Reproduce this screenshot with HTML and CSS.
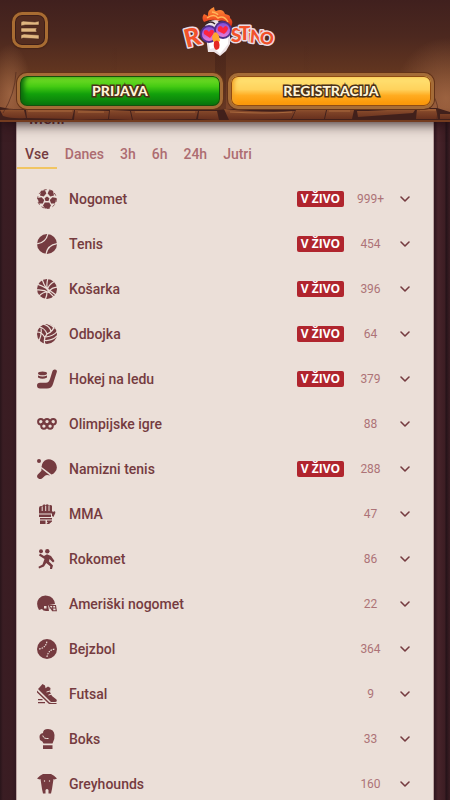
FILE: index.html
```html
<!DOCTYPE html>
<html lang="sl">
<head>
<meta charset="utf-8">
<meta name="viewport" content="width=device-width, initial-scale=1">
<title>Roostino</title>
<link rel="stylesheet" href="styles.css">
</head>
<body>
<header class="header">
  <svg class="roof" viewBox="0 0 450 122" preserveAspectRatio="none" aria-hidden="true">
    <defs>
      <linearGradient id="wood" x1="0" y1="0" x2="0" y2="1"><stop offset="0" stop-color="#40201e"/><stop offset=".3" stop-color="#4c281f"/><stop offset=".6" stop-color="#633620"/><stop offset=".88" stop-color="#7c452a"/><stop offset="1" stop-color="#5a2c1c"/></linearGradient>
      <linearGradient id="plank" x1="0" y1="0" x2="0" y2="1"><stop offset="0" stop-color="#92542f"/><stop offset=".35" stop-color="#7d4227"/><stop offset="1" stop-color="#642e1d"/></linearGradient>
      <radialGradient id="glow"><stop offset="0" stop-color="#b57850" stop-opacity=".6"/><stop offset="1" stop-color="#b57850" stop-opacity="0"/></radialGradient>
      <linearGradient id="seam"><stop offset="0" stop-color="#2a1010" stop-opacity="0"/><stop offset=".5" stop-color="#2a1010" stop-opacity=".3"/><stop offset="1" stop-color="#2a1010" stop-opacity="0"/></linearGradient>
    </defs>
    <rect width="450" height="122" fill="url(#wood)"/>
    <ellipse cx="446" cy="98" rx="52" ry="60" fill="url(#glow)"/>
    <ellipse cx="10" cy="94" rx="22" ry="50" fill="url(#glow)"/>
    <path d="M108 48h9v60h-9zM215 45h11v65h-11zM304 46h9v60h-9z" fill="url(#seam)"/>
    <path d="M0 107Q12 110 25 109H75L109 108 218 110 229 109H325L380 107 395 108H437L450 112V122H0z" fill="#41201b"/>
    <path d="M0 110Q10 109 24 110L26 118Q12 119 3 116zM26 110Q48 109 74 110L72 119 27 118zM75 110L109 111 108 119 74 120zM110 110L130 111 132 120 109 119zM131 111L198 111 196 119 133 120zM199 111H217L219 120 198 119zM224 109Q264 113 295 111L291 119 229 120zM296 110H326L324 119 292 119zM327 110H354L352 119 325 119zM357 111Q380 111 396 109L415 110 413 113 358 117zM417 109H436L438 119 416 119zM440 114H450V119H440z" fill="url(#plank)"/>
    <path d="M28 111H72M78 112H104M135 112H195M230 112Q265 114 292 112M329 111H350M420 110H436" stroke="#a8683d" stroke-width="1" fill="none"/>
    <path d="M16 72Q15 94 3 113M432 94Q440 104 437 119" stroke="#4a251a" stroke-opacity=".6" fill="none"/>
    <path d="M0 120H450V122H0z" fill="#743b1f"/>
  </svg>
  <div class="topbar">
    <button class="menu-button" aria-label="Meni">
      <svg viewBox="0 0 20 20" aria-hidden="true"><path d="M1 2L3 1 15 2 19 1V5L5 5 1 6zM1 8L17 8 16 10 17 12 1 12zM1 15L4 14 19 15V19L3 18 1 19z" fill="#e0b680" stroke="#3c1c16" stroke-width=".5"/></svg>
    </button>
    <a class="logo" href="#" aria-label="Roostino">
      <svg viewBox="0 0 94 52" aria-hidden="true">
        <defs>
          <linearGradient id="fire" x1="0" y1="0" x2="0" y2="1"><stop offset="0" stop-color="#ff963c"/><stop offset=".5" stop-color="#f45a25"/><stop offset="1" stop-color="#d52c1c"/></linearGradient>
          <linearGradient id="lens" x1="0" y1="0" x2="0" y2="1"><stop offset="0" stop-color="#7a49d8"/><stop offset="1" stop-color="#f07fd8"/></linearGradient>
        </defs>
        <path d="M26 20Q30 13 39 14Q47 14 51 22L51 38 47 45 41 50 35 46 29 46 28 38z" fill="#ede3e6"/>
        <path d="M30 38L31 43 35 42 41 48 45 43 49 38V31H30z" fill="#fff"/>
        <g class="logo-type">
          <text x="5" y="40" font-size="25" transform="rotate(-14 13 31)">R</text>
          <text x="52" y="36" font-size="19">S</text>
          <text x="60" y="34" font-size="19">T</text>
          <text x="69" y="36" font-size="17">i</text>
          <text x="71" y="37" font-size="18" transform="rotate(5 77 31)">N</text>
          <text x="81" y="38" font-size="17" transform="rotate(8 86 32)">O</text>
        </g>
        <path d="M25 16Q22 12 25 8Q27 9 29 10Q28 4 35 1Q35 4 37 5Q44 2 46 8Q52 9 51 12Q55 15 52 21Q50 17 45 17Q35 11 25 16z" fill="url(#fire)"/>
        <path d="M28 12Q35 7 39 12Q45 9 49 16M33 6Q38 7 39 9" fill="none" stroke="#ffb55a" stroke-width="1.4"/>
        <path d="M27 18Q32 14 36 18M39 16Q44 14 48 17" fill="none" stroke="#34252b" stroke-width="1.2"/>
        <ellipse cx="30" cy="28" rx="8" ry="8" fill="url(#lens)" stroke="#50308b" stroke-width="1.8"/>
        <ellipse cx="44" cy="24" rx="8" ry="8" fill="url(#lens)" stroke="#50308b" stroke-width="1.8"/>
        <path d="M31 32L25 28Q24 24 27 24Q29 24 30 26Q32 22 35 25Q35 28 31 32zM45 28L39 25Q38 21 41 20Q43 20 44 22Q47 18 49 22Q49 25 45 28z" fill="#ff2440"/>
        <path d="M33 31Q36 22 40 30L41 35 37 37 34 35z" fill="#ffa62e"/>
        <path d="M35 36Q38 33 40 36Q42 43 37 44Q34 42 35 36z" fill="#e52924"/>
      </svg>
    </a>
  </div>
  <nav class="auth" aria-label="Račun">
    <button class="auth-button login">PRIJAVA</button>
    <button class="auth-button register">REGISTRACIJA</button>
  </nav>
</header>
<main class="panel">
  <h1 class="title">Meni</h1>
  <nav class="tabs" aria-label="Čas">
    <button class="tab active">Vse</button><button class="tab">Danes</button><button class="tab">3h</button><button class="tab">6h</button><button class="tab">24h</button><button class="tab">Jutri</button>
  </nav>
  <svg class="defs" aria-hidden="true"><symbol id="chevron" viewBox="0 0 12 12"><path d="M2 4L6 8L10 4" fill="none" stroke="currentColor" stroke-width="1.6" stroke-linecap="round" stroke-linejoin="round"/></symbol></svg>
  <ul class="sports">
    <li><button class="sport"><svg class="icon" viewBox="0 0 20 20"><circle cx="10" cy="10" r="9.4" fill="none" stroke="currentColor" stroke-width=".9" stroke-dasharray="3 2.8"/><path d="M10 7.6L12.4 9.3 11.5 12H8.5L7.6 9.3zM4 1.8L8 1.3 9.3 4.5 6.7 7.4 3 6.4zM12 1.3L16 1.8 17 6.4 13.3 7.4 10.7 4.5zM.6 9L4.5 8.2 7.2 11 5.9 14.5 2 14.5zM19.4 9L15.5 8.2 12.8 11 14.1 14.5 18 14.5zM7.8 13.4H12.2L14 16.5 12 19.5H8L6 16.5z"/></svg><span class="name">Nogomet</span><span class="live">V ŽIVO</span><span class="count">999+</span><svg class="chevron"><use href="#chevron"/></svg></button></li>
    <li><button class="sport"><svg class="icon" viewBox="0 0 20 20"><circle cx="10" cy="10" r="10"/><path class="cut" d="M-.5 10Q9 9 11 -.5M9 20.5Q10 11 20.5 9.5"/></svg><span class="name">Tenis</span><span class="live">V ŽIVO</span><span class="count">454</span><svg class="chevron"><use href="#chevron"/></svg></button></li>
    <li><button class="sport"><svg class="icon" viewBox="0 0 20 20"><circle cx="10" cy="10" r="10"/><path class="cut" d="M5 0Q8 10 17 18M0 5Q9 8 19 16M11 -1Q9 6 10.5 11M-1 11Q6 10 13 14M18 2Q11 6 10.5 11M21 8Q15 8 12 12.5M2 17Q6 13 10 13M8 21Q10 17 10 13"/></svg><span class="name">Košarka</span><span class="live">V ŽIVO</span><span class="count">396</span><svg class="chevron"><use href="#chevron"/></svg></button></li>
    <li><button class="sport"><svg class="icon" viewBox="0 0 20 20"><circle cx="10" cy="10" r="10"/><path class="cut" d="M10 10Q8 4 2 3M10 10Q16 8 17.5 1M10 10Q6 14 8 21M6 0Q13 2 14 7.5M10 -.5Q17 2 17 5M0 8Q5 8 7.5 13M4 4.5Q5 10 2 17M20.5 7Q17 12 9 13M20 12Q15 17 8 16.5"/></svg><span class="name">Odbojka</span><span class="live">V ŽIVO</span><span class="count">64</span><svg class="chevron"><use href="#chevron"/></svg></button></li>
    <li><button class="sport"><svg class="icon" viewBox="0 0 20 20"><path d="M15.5 2Q16 .2 18 .4Q20.4.7 19.8 3L16 15Q14.7 19.5 10 19.5H3Q0 19.5 0 16.5Q0 13.7 3 13.7H9Q12 13.7 13 10z"/><ellipse cx="5.5" cy="4.4" rx="4.5" ry="1.8"/><path d="M1 6.5Q5.5 8.5 10 6.5V8.5Q5.5 11 1 8.5z"/></svg><span class="name">Hokej na ledu</span><span class="live">V ŽIVO</span><span class="count">379</span><svg class="chevron"><use href="#chevron"/></svg></button></li>
    <li><button class="sport"><svg class="icon" viewBox="0 0 20 20"><g fill="none" stroke="currentColor" stroke-width="2"><circle cx="3.8" cy="7.8" r="2.7"/><circle cx="10" cy="7.8" r="2.7"/><circle cx="16.2" cy="7.8" r="2.7"/><circle cx="6.9" cy="12" r="2.7"/><circle cx="13.1" cy="12" r="2.7"/></g></svg><span class="name">Olimpijske igre</span><span class="count">88</span><svg class="chevron"><use href="#chevron"/></svg></button></li>
    <li><button class="sport"><svg class="icon" viewBox="0 0 20 20"><circle cx="2" cy="2" r="2"/><path d="M4.5 8Q5 2 10 .5Q15 -.5 18.5 4Q21.5 9 18 13Q16.5 15 14.5 15.5zM4 9.3L13 16.5Q9.5 15.5 8 16.7L5 19.5Q2.7 21 .8 19Q-.8 17 1 15.2L4 12.2Q5 11 4 9.3z"/></svg><span class="name">Namizni tenis</span><span class="live">V ŽIVO</span><span class="count">288</span><svg class="chevron"><use href="#chevron"/></svg></button></li>
    <li><button class="sport"><svg class="icon" viewBox="0 0 20 20"><path d="M2 4Q2 2 4 2Q5 2 5.5 3V1.5Q6 0 8 .5L8.8 2V1Q10 -.3 11.7 1V2Q14 0 15 2V7L16 8Q18.5 6 18.3 9L16.5 13 15 12V9.5H2zM2 10.5H14V13H2zM3 14H15V15.5H3zM3 16.5H8.5V20H3zM10 16.5H15V17.5L12 20H9.5L11 18H10z"/><path class="cut thin" d="M5.2 3V7M8.7 2V7M12 2V7"/></svg><span class="name">MMA</span><span class="count">47</span><svg class="chevron"><use href="#chevron"/></svg></button></li>
    <li><button class="sport"><svg class="icon" viewBox="0 0 20 20"><circle cx="4" cy="2.3" r="2"/><circle cx="10.3" cy="2.2" r="2.2"/><path d="M3 4.5L7 7 10 5.2 14 7 17.5 12 16 13.5 12.5 10 12 12.5 16 16.5 15 20 13 20 13.2 17.3 9.2 14 7 17.5 2 19.5 1.5 17.7 5.5 15.5 7.5 10 2 6.5z"/></svg><span class="name">Rokomet</span><span class="count">86</span><svg class="chevron"><use href="#chevron"/></svg></button></li>
    <li><button class="sport"><svg class="icon" viewBox="0 0 20 20"><path d="M2 16Q-1.8 9 2 4.5Q5 1 10 1.7Q17 2.5 18 10L12 11 11.2 12 12 17H9Q6 17 5 15z"/><path d="M12 11.5H18.5L19.3 16.8H15.5L12 11.5M12.5 14H19M15.7 11.5V16.5" fill="none" stroke="currentColor" stroke-width="1.1"/><rect class="hole" x="7" y="12" width="2.5" height="2.5"/></svg><span class="name">Ameriški nogomet</span><span class="count">22</span><svg class="chevron"><use href="#chevron"/></svg></button></li>
    <li><button class="sport"><svg class="icon" viewBox="0 0 20 20"><circle cx="10" cy="10" r="10"/><path class="cut stitch" d="M2 10Q9 9 10 2M10 18Q11 11 18 10"/></svg><span class="name">Bejzbol</span><span class="count">364</span><svg class="chevron"><use href="#chevron"/></svg></button></li>
    <li><button class="sport"><svg class="icon" viewBox="0 0 20 20"><path d="M2 4L5.5 0 8 1.5 8.5 4.3 11 2.5 13.5 4 13 8 15 12 19.5 15.5Q20.5 18 18 18H14L1 5z"/><path d="M0 6.5L12.5 18.5Q13 19 19.5 19V20H12L0 8.5zM1 15H5.5V16.3H1zM1 18H8V19.3H1z"/><path class="cut thin" d="M9.5 8L13 7M11.5 11L15 10"/></svg><span class="name">Futsal</span><span class="count">9</span><svg class="chevron"><use href="#chevron"/></svg></button></li>
    <li><button class="sport"><svg class="icon" viewBox="0 0 20 20"><path d="M3 11Q1 5 6 4Q6 0 11 0Q17 0 17.5 6Q18 10 15.5 14.5H6.5Q6 12 3 11zM6 16.3H15.5V20H6z"/><path class="cut thin" d="M5.8 6.5Q6.5 10 11.5 9.5"/></svg><span class="name">Boks</span><span class="count">33</span><svg class="chevron"><use href="#chevron"/></svg></button></li>
    <li><button class="sport"><svg class="icon" viewBox="0 0 20 20"><path d="M0 4.5Q3 1 6 0H14Q17 1 20 4.5L17.5 5.5 16.5 5 15 15 14 19.5H11.5V16Q10 14 8.5 16V19.5H6L5 15 3.5 5 2.5 5.5z"/><circle class="hole" cx="7.5" cy="7" r=".7"/><circle class="hole" cx="12.5" cy="7" r=".7"/></svg><span class="name">Greyhounds</span><span class="count">160</span><svg class="chevron"><use href="#chevron"/></svg></button></li>
  </ul>
</main>
</body>
</html>
```

FILE: styles.css
```css
* { box-sizing: border-box; }
html { scrollbar-width: none; }
body {
  margin: 0;
  min-height: 100vh;
  background: linear-gradient(90deg, #29151a 0, #3a1d23 3px, #3a1c22 12px, #321820 16px, #321820 calc(100% - 15px), #48242b calc(100% - 12px), #3c1d23 calc(100% - 5px), #241218 calc(100% - 4px), #3b1d23 100%);
  color: #753b40;
  font-family: Roboto, sans-serif;
}
button { font: inherit; color: inherit; border: 0; background: none; padding: 0; cursor: pointer; }
.header {
  position: fixed;
  z-index: 2;
  top: 0;
  left: 0;
  right: 0;
  height: 122px;
  padding: 6px 16px 0 17px;
  box-shadow: 0 2px 12px rgb(30 10 15 / 85%);
}
.roof { position: absolute; inset: 0; z-index: -1; width: 100%; height: 100%; }
.topbar { display: grid; grid-template-columns: 1fr auto 1fr; height: 67px; }
.menu-button {
  width: 36px;
  height: 36px;
  margin: 6px 0 0 -5px;
  padding: 5px;
  border: 3px solid #a86c32;
  border-radius: 10px;
  background: #542d20;
  box-shadow: inset 0 0 0 1px #3f1f19, 0 0 1px 1px #482417;
}
.menu-button svg { display: block; width: 20px; height: 20px; }
.logo svg { display: block; width: 94px; height: 52px; overflow: visible; }
.logo-type { font: 900 18px Lato, sans-serif; fill: #f2512a; stroke: #eadbe4; stroke-width: 3px; stroke-linejoin: round; paint-order: stroke; }
.auth { display: grid; grid-template-columns: 1fr 1fr; gap: 5px; }
.auth-button {
  height: 36px;
  border: 3px solid #a56c37;
  border-radius: 10px;
  color: #fff4d6;
  font: 900 14px/30px Lato, sans-serif;
  -webkit-text-stroke: 3px #4a3018;
  paint-order: stroke fill;
}
.login { background: linear-gradient(#80e12c, #45cb13 35%, #12a00b 60%, #08740c); box-shadow: inset 0 0 0 1px #174f0c, inset 4px 0 5px #0c680c, 0 0 0 1px #633319; }
.register { background: linear-gradient(#ffe477, #ffd25c 45%, #ffac21 65%, #f99100); box-shadow: inset 0 0 0 1px #8f4b13, inset 3px 0 4px #f3a326, 0 0 0 1px #633319; }
.panel { margin: 0 16px; padding-top: 105px; background: #ebdfd8; border-left: 1px solid #bca5a2; border-right: 1px solid #bca5a2; }
.title { margin: 0; padding-left: 12px; font-size: 16px; line-height: 28px; font-weight: 500; }
.tabs { display: flex; margin-top: 6px; }
.tab { height: 30px; padding: 2px 8px 0; font-size: 14px; font-weight: 500; color: #ad6c71; border-bottom: 2px solid transparent; }
.tab.active { color: #753b40; border-color: #f1c562; }
.defs { position: absolute; width: 0; height: 0; }
.sports { list-style: none; margin: 0; padding: 7px 0 0; }
.sports li { height: 45px; }
.sport { display: flex; align-items: center; width: 100%; height: 45px; padding: 0 22px 0 20px; text-align: left; }
.icon { width: 20px; height: 20px; flex: none; margin-right: 12px; fill: currentColor; overflow: hidden; }
.cut { fill: none; stroke: #ebdfd8; stroke-width: 1.2; }
.thin { stroke-width: 1; }
.stitch { stroke-dasharray: 1.5 1; }
.hole { fill: #ebdfd8; }
.name { flex: 1; font-size: 14px; font-weight: 500; }
.live { padding: 0 4px; border-radius: 2px; background: #b0252e; color: #fff; font: 700 12px/16px "Open Sans", sans-serif; }
.count { width: 53px; text-align: center; font-size: 12px; color: #ad7377; }
.chevron { width: 12px; height: 12px; margin-left: 2px; }
```
